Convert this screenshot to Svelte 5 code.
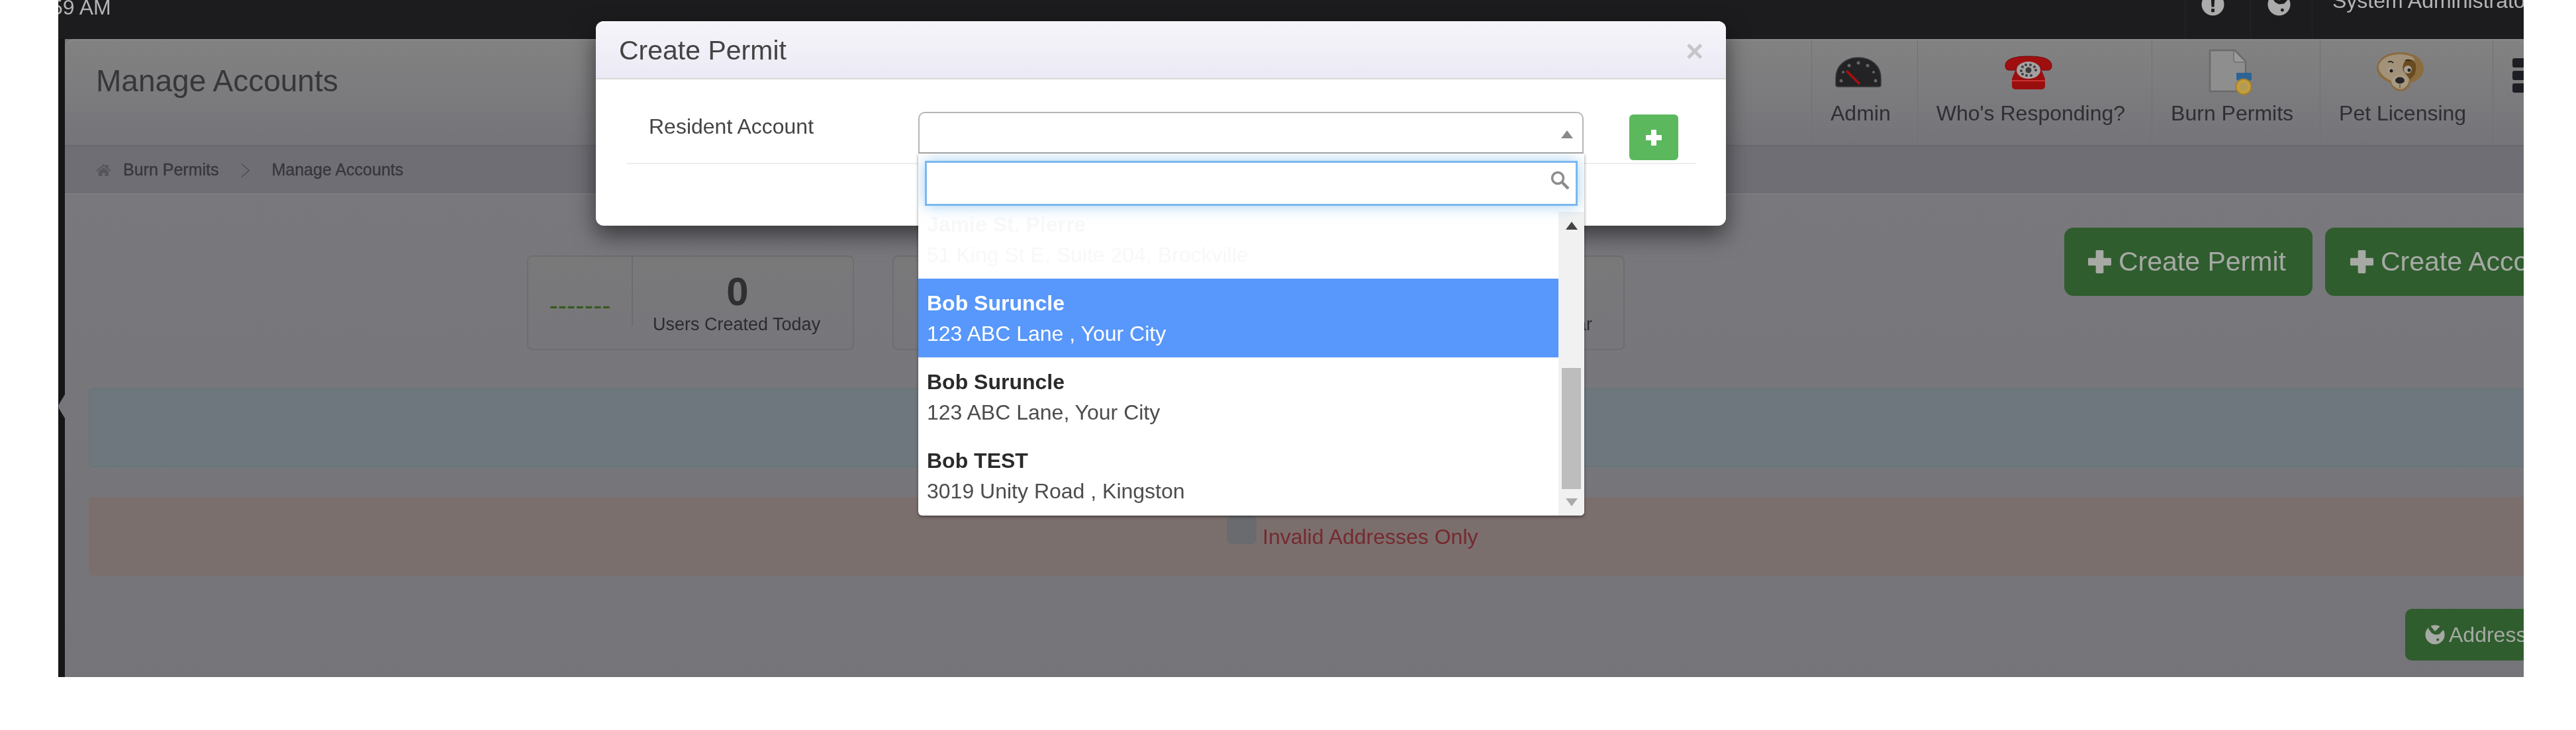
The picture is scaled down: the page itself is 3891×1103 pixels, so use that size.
<script>
  const nav = [
    { label: 'Admin', icon: 'gauge' },
    { label: "Who's Responding?", icon: 'phone' },
    { label: 'Burn Permits', icon: 'doc' },
    { label: 'Pet Licensing', icon: 'dog' }
  ];
  const results = [
    { name: 'Jamie St. Pierre', address: '51 King St E, Suite 204, Brockville', kind: 'ghost' },
    { name: 'Bob Suruncle', address: '123 ABC Lane , Your City', kind: 'active' },
    { name: 'Bob Suruncle', address: '123 ABC Lane, Your City', kind: '' },
    { name: 'Bob TEST', address: '3019 Unity Road , Kingston', kind: '' }
  ];
</script>

{#snippet plus(cls)}
  <svg class={cls} viewBox="0 0 24 24" aria-hidden="true"><path d="M9 0h6a1 1 0 0 1 1 1v7h7a1 1 0 0 1 1 1v6a1 1 0 0 1-1 1h-7v7a1 1 0 0 1-1 1H9a1 1 0 0 1-1-1v-7H1a1 1 0 0 1-1-1V9a1 1 0 0 1 1-1h7V1a1 1 0 0 1 1-1z" fill="currentColor"/></svg>
{/snippet}

{#snippet globe(cls, ink)}
  <svg class={cls} viewBox="0 0 36 36" aria-hidden="true"><circle cx="18" cy="18" r="17.500" fill="currentColor"/><path d="M9 1l9 11 10-10 6 6-8 9-8 1-6-3-6-8z" fill={ink}/><circle cx="23" cy="27" r="2.500" fill={ink}/></svg>
{/snippet}

<div class="frame">
  <header class="topbar">
    <span class="time">59 AM</span>
    <div class="tools">
      <div class="cell info">
        <svg class="top-icon" viewBox="0 0 36 36" aria-hidden="true"><circle cx="18" cy="18" r="17.5" fill="#ababab"/><path d="M15 7h6l-1 15h-4zM15.500 25h5v5h-5z" fill="#1c1b1e"/></svg>
      </div>
      <div class="cell geo">{@render globe('top-icon', '#1c1b1e')}</div>
      <div class="cell user"><span>System Administrator</span></div>
    </div>
  </header>

  <div class="shell">
    <aside class="rail"></aside>
    <main class="content">
      <section class="page-head">
        <div class="title-wrap"><h1>Manage Accounts</h1></div>
        <nav class="apps">
          {#each nav as item}
            <div class="app">
              <div class="app-icon">
                {#if item.icon === 'gauge'}
                  <svg width="70" height="46" viewBox="0 0 70 46" aria-hidden="true">
                    <path d="M1 42V32C1 13 16 1 35 1s34 12 34 31v10a3 3 0 0 1-3 3H4a3 3 0 0 1-3-3z" fill="#232325" stroke="#3a3a3c" stroke-width="1.500"/>
                    <g fill="#666"><circle cx="9" cy="36" r="2.500"/><circle cx="12" cy="23" r="2"/><circle cx="21" cy="13" r="2.500"/><circle cx="35" cy="9" r="2.500"/><circle cx="49" cy="13" r="2.500"/><circle cx="58" cy="23" r="2"/><circle cx="61" cy="36" r="2.500"/></g>
                    <path d="M17 21l20 20" stroke="#a8100c" stroke-width="3.500"/>
                  </svg>
                {:else if item.icon === 'phone'}
                  <svg width="74" height="53" viewBox="0 0 74 53" aria-hidden="true">
                    <path d="M2 16C2 6 16 2 37 2s35 4 35 14c0 5-2 7-6 7h-7c-3 0-4-2-4-6 0-3-8-4-18-4s-18 1-18 4c0 4-1 6-4 6H8c-4 0-6-2-6-7z" fill="#a00f0f" stroke="#6e0808"/>
                    <path d="M21 14h32l9 22v11a5 5 0 0 1-5 5H17a5 5 0 0 1-5-5V36z" fill="#9a0e0e"/>
                    <path d="M12 38h50v2H12z" fill="#c33"/>
                    <ellipse cx="37" cy="23" rx="18" ry="13" fill="#a5a0a0"/>
                    <g fill="#3c3c3e"><circle cx="37" cy="23" r="4.500"/><circle cx="26" cy="24" r="2"/><circle cx="28" cy="18" r="2"/><circle cx="33" cy="15" r="2"/><circle cx="40" cy="15" r="2"/><circle cx="46" cy="18" r="2"/><circle cx="48" cy="23" r="2"/><circle cx="28" cy="29" r="2"/><circle cx="34" cy="31" r="2"/><circle cx="41" cy="31" r="2"/></g>
                  </svg>
                {:else if item.icon === 'doc'}
                  <svg width="66" height="70" viewBox="0 0 66 70" aria-hidden="true">
                    <path d="M3 2h38l16 17v45H3z" fill="#8e8e8e" stroke="#6a6a6a" stroke-width="2.500" stroke-linejoin="round"/>
                    <path d="M39 3v14a3 3 0 0 0 3 3h14" fill="#9a9a9a" stroke="#777" stroke-width="2"/>
                    <path d="M43 36h23v10l-6 5H49l-6-5z" fill="#2d6396"/>
                    <circle cx="54" cy="57" r="11.500" fill="#c29f3f" stroke="#a8812c" stroke-width="2"/>
                    <circle cx="54" cy="57" r="6" fill="#b59a55"/>
                  </svg>
                {:else}
                  <svg width="72" height="60" viewBox="0 0 72 60" aria-hidden="true">
                    <path d="M10 7C16 2 26 0 36 0s21 3 27 8c5 4 8 12 8 17 0 8-6 15-12 18l-8 3c-1 7-8 13-15 13s-13-5-16-13l-8-4C5 38 0 31 0 24 0 17 4 11 10 7z" fill="#8a6c3f"/>
                    <path d="M12 9C18 5 27 3 36 3c5 0 12 1 18 4 5 4 5 16 2 26l-7 9c-2 8-7 14-13 14s-12-5-14-13C14 40 4 32 3 24c-1-6 4-12 9-15z" fill="#a2927a"/>
                    <path d="M41 16c3-6 12-7 16-2 3 5 3 13 0 20l-7 8c-2-5-7-10-10-14-1-4-1-8 1-12z" fill="#6a4a1f"/>
                    <ellipse cx="47" cy="26" rx="6" ry="6" fill="#a79e90"/>
                    <circle cx="49" cy="27" r="2.500" fill="#222"/>
                    <ellipse cx="21" cy="27" rx="4" ry="4" fill="#a79e90"/><circle cx="22" cy="28" r="2.500" fill="#26181c"/>
                    <path d="M17 15q4-3 8 1M43 13q4-3 8 0" stroke="#2e2a22" stroke-width="1.800" fill="none"/>
                    <ellipse cx="35" cy="44" rx="13" ry="10" fill="#a89a82"/>
                    <ellipse cx="35" cy="42.500" rx="7" ry="5" fill="#26262a"/>
                    <path d="M35 48v6" stroke="#6d5a3c" stroke-width="1.500"/>
                  </svg>
                {/if}
              </div>
              <span class="app-label">{item.label}</span>
            </div>
          {/each}
          <div class="app more">
            <span class="bar"></span><span class="bar"></span><span class="bar"></span>
          </div>
        </nav>
      </section>

      <div class="crumbs">
        <svg class="home" viewBox="0 0 24 20" aria-hidden="true"><path d="M12 1l4 3.500V2h3.500v5.500L24 11.500l-1.500 1.500L12 4 1.500 13 0 11.500zM4 13l8-7 8 7v7h-6v-5h-4v5H4z" fill="#55555a"/></svg>
        <span>Burn Permits</span>
        <svg class="sep" viewBox="0 0 16 24" aria-hidden="true"><path d="M2 1l12 11L2 23" fill="none" stroke="#4e4e53" stroke-width="1.600"/></svg>
        <span>Manage Accounts</span>
      </div>

      <div class="page-body">
        <div class="top-row">
          <div class="stats">
            <div class="stat first">
              <div class="stat-key">-------</div>
              <div class="stat-val"><strong>0</strong><small>Users Created Today</small></div>
            </div>
            <div class="stat second"></div>
            <div class="stat third"><small>Users Created This Year</small></div>
          </div>
          <button class="btn big">{@render plus('btn-plus')}Create Permit</button>
          <button class="btn big second-btn">{@render plus('btn-plus')}Create Account</button>
        </div>

        <div class="alert info-alert"></div>
        <div class="alert danger-alert">
          <span class="check"></span>
          <span class="check-label">Invalid Addresses Only</span>
        </div>

        <button class="btn small-btn">{@render globe('globe-ico', '#2f5d2e')}Address</button>
      </div>
    </main>
  </div>

  <svg class="rail-tab" viewBox="0 0 10 36" aria-hidden="true"><path d="M10 0v36L1 21q-1-3 0-6z" fill="#77767b"/></svg>

  <div class="modal">
    <div class="modal-head">
      <h2>Create Permit</h2>
      <span class="close">×</span>
    </div>
    <div class="modal-body">
      <div class="form-row">
        <label class="field-label" for="acct">Resident Account</label>
        <div class="select">
          <svg class="select-arrow" viewBox="0 0 18 12" aria-hidden="true"><path d="M9 0l9 12H0z" fill="#8a8a8a"/></svg>
          <div class="drop">
            <div class="search">
              <input id="acct" type="text" />
              <svg class="search-ico" viewBox="0 0 30 28" aria-hidden="true"><circle cx="11" cy="11" r="8.500" fill="none" stroke="#8c8c8c" stroke-width="3.500"/><path d="M17 17l10 10" stroke="#8c8c8c" stroke-width="4.500"/></svg>
            </div>
            <div class="results">
              <ul>
                {#each results as r}
                  <li class={r.kind}>
                    <b>{r.name}</b>
                    <span>{r.address}</span>
                  </li>
                {/each}
              </ul>
              <div class="scroll">
                <svg class="scroll-arrow" viewBox="0 0 18 12" aria-hidden="true"><path d="M9 0l9 12H0z" fill="#444"/></svg>
                <div class="thumb"></div>
                <svg class="scroll-arrow down" viewBox="0 0 18 12" aria-hidden="true"><path d="M0 0h18L9 12z" fill="#aaa"/></svg>
              </div>
            </div>
          </div>
        </div>
        <button class="add" aria-label="Add">{@render plus('add-plus')}</button>
      </div>
    </div>
  </div>
</div>

<style>
  :global(body) {
    margin: 0;
    background: #fff;
    overflow: hidden;
  }

  .frame {
    position: relative;
    margin-left: 88px;
    width: 3724px;
    height: 1023px;
    overflow: hidden;
    display: flex;
    flex-direction: column;
    background: #161618;
    font-family: "Liberation Sans", Arial, sans-serif;
    font-size: 32px;
    filter: blur(0.7px);
  }

  /* top bar */
  .topbar {
    flex: none;
    height: 59px;
    display: flex;
    justify-content: space-between;
    background: #1c1b1e;
    color: #b4b4b4;
  }
  .time {
    margin: -5px 0 0 -11px;
    line-height: 32px;
    white-space: nowrap;
  }
  .tools {
    display: flex;
    width: 512px;
    flex: none;
  }
  .cell {
    border-left: 1px solid #262528;
    flex: none;
    height: 59px;
    box-sizing: border-box;
  }
  .info { width: 99px; padding-left: 24px; }
  .geo { width: 93px; padding-left: 25px; color: #ababab; }
  .user {
    width: 320px;
    padding-left: 30px;
    white-space: nowrap;
    overflow: hidden;
  }
  .user span {
    display: block;
    margin-top: -15px;
    line-height: 32px;
  }
  .top-icon {
    display: block;
    width: 35px;
    height: 35px;
    margin-top: -11px;
  }

  /* shell */
  .shell {
    flex: 1;
    display: flex;
    min-height: 0;
  }
  .rail { flex: none; width: 10px; background: #161618; }
  .content {
    flex: 1;
    min-width: 0;
    display: flex;
    flex-direction: column;
    background: linear-gradient(#7a797e, #757479);
  }

  .page-head {
    flex: none;
    height: 160px;
    box-sizing: border-box;
    display: flex;
    border-top-left-radius: 14px;
    border-top: 2px solid #8a8a8a;
    background: linear-gradient(#828282, #757479);
  }
  .title-wrap {
    flex: none;
    width: 2638px;
    box-sizing: border-box;
    padding: 31px 0 0 47px;
  }
  h1 {
    margin: 0;
    font-size: 46px;
    line-height: 60px;
    font-weight: 400;
    color: #36363b;
  }
  .apps { display: flex; flex: none; }
  .app {
    flex: none;
    box-sizing: border-box;
    height: 157px;
    padding: 13px 40px 0 28px;
    border-left: 1px solid #717074;
    display: flex;
    flex-direction: column;
    align-items: center;
  }
  .app-icon {
    height: 70px;
    margin-right: 7px;
    display: flex;
    align-items: center;
    justify-content: center;
  }
  .app-label {
    margin-top: 7px;
    line-height: 40px;
    color: #2e2e33;
    white-space: nowrap;
  }
  .more {
    align-items: flex-start;
    padding: 27px 0 0 29px;
    gap: 5px;
    width: 60px;
  }
  .bar {
    display: block;
    width: 24px;
    height: 14px;
    border-radius: 3px;
    background: #1d1e23;
  }

  .crumbs {
    flex: none;
    height: 75px;
    box-sizing: border-box;
    display: flex;
    align-items: center;
    padding-left: 47px;
    font-size: 25px;
    color: #37373d;
    -webkit-text-stroke: 0.4px #37373d;
    background: #6f6e74;
    border-top: 2px solid #69686d;
    border-bottom: 2px solid #7e7d81;
  }
  .home { width: 23px; height: 19px; margin-right: 18px; }
  .sep { width: 15px; height: 23px; margin: 2px 32px 0 33px; }

  .page-body {
    flex: 1;
    min-height: 0;
    padding-top: 50px;
  }
  .top-row {
    display: flex;
    align-items: flex-start;
    height: 185px;
  }
  .stats {
    flex: none;
    display: flex;
    gap: 58px;
    margin: 42px 0 0 698px;
  }
  .stat {
    flex: none;
    box-sizing: border-box;
    height: 143px;
    border: 2px solid #6e6d70;
    border-radius: 8px;
    background: linear-gradient(#79797a, #77767b);
  }
  .first { width: 494px; display: flex; }
  .second { width: 524px; }
  .third {
    width: 524px;
    display: flex;
    justify-content: flex-end;
    padding: 87px 47px 0 0;
  }
  .stat-key {
    width: 158px;
    height: 104px;
    box-sizing: border-box;
    border-right: 2px solid #6c6b6f;
    color: #365a1c;
    font-size: 40px;
    text-align: center;
    line-height: 34px;
    padding-top: 56px;
  }
  .stat-val {
    flex: 1;
    padding: 18px 0 0 30px;
    display: flex;
    flex-direction: column;
    width: 256px;
    align-items: flex-start;
  }
  .stat-val strong {
    width: 256px;
    text-align: center;
    font-size: 60px;
    line-height: 70px;
    color: #2e2e33;
  }
  small {
    font-size: 27px;
    line-height: 30px;
    color: #2c2c30;
    white-space: nowrap;
  }
  .stat-val small { margin-top: -1px; }

  .btn {
    flex: none;
    display: flex;
    align-items: center;
    border: 0;
    font-family: inherit;
    color: #a6a9a4;
    background: #2f5d2e;
    white-space: nowrap;
  }
  .big {
    height: 103px;
    width: 375px;
    margin-left: 664px;
    padding: 0 0 0 36px;
    border-radius: 14px;
    font-size: 41px;
  }
  .second-btn { margin-left: 19px; width: 380px; padding-left: 38px; }
  .btn-plus { width: 35px; height: 35px; margin-right: 11px; }

  .alert {
    box-sizing: border-box;
    margin: 0 -60px 0 36px;
    height: 119px;
    border-radius: 6px;
  }
  .info-alert {
    margin-top: 58px;
    background: #6f777e;
    border: 2px solid #66767a;
  }
  .danger-alert {
    margin-top: 45px;
    background: #7b6f6e;
    display: flex;
    align-items: flex-start;
    padding: 28px 0 0 1719px;
  }
  .check {
    flex: none;
    width: 45px;
    height: 43px;
    border-radius: 8px;
    background: #696b6e;
  }
  .check-label {
    margin: 12px 0 0 9px;
    line-height: 40px;
    color: #752a2e;
  }

  .small-btn {
    margin: 50px 0 0 3535px;
    height: 78px;
    width: 260px;
    padding-left: 30px;
    border-radius: 10px;
    font-size: 32px;
  }
  .globe-ico { width: 30px; height: 30px; margin-right: 6px; }

  .rail-tab {
    position: absolute;
    left: 0;
    top: 596px;
    width: 10px;
    height: 36px;
  }

  /* modal */
  .modal {
    position: absolute;
    left: 812px;
    top: 32px;
    width: 1707px;
    height: 309px;
    border-radius: 12px;
    background: #fff;
    box-shadow: 0 14px 34px rgba(0, 0, 0, 0.55);
  }
  .modal-head {
    height: 88px;
    box-sizing: border-box;
    padding: 2px 0 0 35px;
    display: flex;
    justify-content: space-between;
    align-items: center;
    border-radius: 12px 12px 0 0;
    border-bottom: 2px solid #d9d9d9;
    background: linear-gradient(#f6f5fa, #ebe9f4);
  }
  h2 {
    margin: 0;
    font-size: 41px;
    font-weight: 400;
    color: #444;
    line-height: 50px;
  }
  .close {
    margin: 2px 34px 0 0;
    font-size: 46px;
    line-height: 46px;
    font-weight: 700;
    color: #c6c6ca;
  }
  .modal-body { padding: 49px 46px 0; }
  .form-row {
    display: flex;
    align-items: flex-start;
    height: 79px;
    box-sizing: border-box;
    padding-left: 34px;
    border-bottom: 2px solid #eee;
  }
  .field-label {
    flex: none;
    width: 407px;
    margin-top: -2px;
    line-height: 48px;
    color: #444;
  }
  .select {
    position: relative;
    flex: none;
    width: 1005px;
    height: 63px;
    box-sizing: border-box;
    border: 2px solid #b5b5b5;
    border-bottom-color: #aaa;
    border-radius: 10px 10px 0 0;
    background: #fff;
    z-index: 2;
  }
  .select-arrow {
    position: absolute;
    right: 14px;
    top: 26px;
    width: 18px;
    height: 12px;
  }
  .add {
    flex: none;
    margin: 4px 0 0 69px;
    width: 74px;
    height: 69px;
    padding: 0;
    border: 0;
    border-radius: 6px;
    background: #5cb85c;
    color: #fff;
    display: flex;
    align-items: center;
    justify-content: center;
  }
  .add-plus { width: 24px; height: 24px; }

  .drop {
    position: absolute;
    left: -2px;
    top: 61px;
    width: 1006px;
    height: 547px;
    box-sizing: border-box;
    background: #fff;
    border-radius: 0 0 6px 6px;
    box-shadow: 0 2px 4px rgba(0, 0, 0, 0.45);
    display: flex;
    flex-direction: column;
    overflow: hidden;
  }
  .search {
    position: relative;
    z-index: 1;
    flex: none;
    margin: 11px 10px 0;
    height: 68px;
  }
  .search input {
    display: block;
    width: 100%;
    height: 100%;
    box-sizing: border-box;
    margin: 0;
    border: 3px solid #7ab8ee;
    outline: 0;
    background: #fff;
    box-shadow: 0 0 22px rgba(102, 175, 233, 0.6);
  }
  .search-ico {
    position: absolute;
    right: 11px;
    top: 15px;
    width: 30px;
    height: 28px;
  }
  .results {
    flex: none;
    margin-top: 9px;
    height: 459px;
    display: flex;
    overflow: hidden;
  }
  ul {
    flex: 1;
    list-style: none;
    margin: -18px 0 0;
    padding: 0;
  }
  li {
    height: 119px;
    box-sizing: border-box;
    padding: 14px 0 0 13px;
    display: flex;
    flex-direction: column;
    color: #4c4c4c;
  }
  li b, li span { line-height: 46px; }
  li b { color: #2a2a2a; }
  .active { background: #5897fb; color: #fff; }
  .active b { color: #fff; }
  .ghost, .ghost b { color: #f8f8f8; }
  .scroll {
    flex: none;
    width: 39px;
    background: #f1f1f1;
    display: flex;
    flex-direction: column;
    align-items: center;
    padding-top: 15px;
    box-sizing: border-box;
  }
  .scroll-arrow { flex: none; width: 18px; height: 12px; }
  .thumb {
    flex: none;
    margin-top: 209px;
    width: 29px;
    height: 183px;
    background: #bdbdbd;
  }
  .down { margin-top: 14px; }
</style>
